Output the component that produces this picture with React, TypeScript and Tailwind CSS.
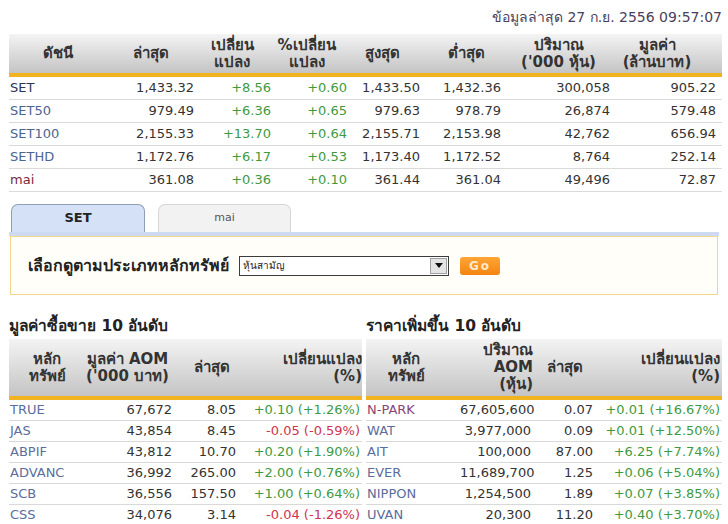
const font = "font-['DejaVu_Sans','Noto_Sans',sans-serif]";

type IndexRow = {
  name: string;
  color: string;
  last: string;
  chg: string;
  pct: string;
  high: string;
  low: string;
  vol: string;
  val: string;
};

const indexRows: IndexRow[] = [
  { name: "SET", color: "text-[#2b3553]", last: "1,433.32", chg: "+8.56", pct: "+0.60", high: "1,433.50", low: "1,432.36", vol: "300,058", val: "905.22" },
  { name: "SET50", color: "text-[#4b6591]", last: "979.49", chg: "+6.36", pct: "+0.65", high: "979.63", low: "978.79", vol: "26,874", val: "579.48" },
  { name: "SET100", color: "text-[#4b6591]", last: "2,155.33", chg: "+13.70", pct: "+0.64", high: "2,155.71", low: "2,153.98", vol: "42,762", val: "656.94" },
  { name: "SETHD", color: "text-[#4b6591]", last: "1,172.76", chg: "+6.17", pct: "+0.53", high: "1,173.40", low: "1,172.52", vol: "8,764", val: "252.14" },
  { name: "mai", color: "text-[#7b2740]", last: "361.08", chg: "+0.36", pct: "+0.10", high: "361.44", low: "361.04", vol: "49,496", val: "72.87" },
];

type TopRow = { sym: string; color?: string; a: string; last: string; chg: string; up: boolean };

const topValue: TopRow[] = [
  { sym: "TRUE", a: "67,672", last: "8.05", chg: "+0.10 (+1.26%)", up: true },
  { sym: "JAS", a: "43,854", last: "8.45", chg: "-0.05 (-0.59%)", up: false },
  { sym: "ABPIF", a: "43,812", last: "10.70", chg: "+0.20 (+1.90%)", up: true },
  { sym: "ADVANC", a: "36,992", last: "265.00", chg: "+2.00 (+0.76%)", up: true },
  { sym: "SCB", a: "36,556", last: "157.50", chg: "+1.00 (+0.64%)", up: true },
  { sym: "CSS", a: "34,076", last: "3.14", chg: "-0.04 (-1.26%)", up: false },
];

const topGain: TopRow[] = [
  { sym: "N-PARK", color: "text-[#8a4677]", a: "67,605,600", last: "0.07", chg: "+0.01 (+16.67%)", up: true },
  { sym: "WAT", a: "3,977,000", last: "0.09", chg: "+0.01 (+12.50%)", up: true },
  { sym: "AIT", a: "100,000", last: "87.00", chg: "+6.25 (+7.74%)", up: true },
  { sym: "EVER", a: "11,689,700", last: "1.25", chg: "+0.06 (+5.04%)", up: true },
  { sym: "NIPPON", a: "1,254,500", last: "1.89", chg: "+0.07 (+3.85%)", up: true },
  { sym: "UVAN", a: "20,300", last: "11.20", chg: "+0.40 (+3.70%)", up: true },
];

const green = "text-[#3f9a3f]";
const red = "text-[#d0344e]";

function HeaderBar({ cols, h, children }: { cols: string; h: string; children: React.ReactNode }) {
  return (
    <>
      <div className={`grid ${cols} ${h} items-center bg-linear-to-b from-[#f4f4f4] to-[#c4c4c4] text-[15px] font-bold leading-[17px] text-[#333]`}>
        {children}
      </div>
      <div className="h-[4px] bg-[#f2b320]" />
    </>
  );
}

function TopTable({ title, rows, headCols, rowCols, head }: { title: string; rows: TopRow[]; headCols: string; rowCols: string; head: React.ReactNode }) {
  return (
    <div>
      <div className="mt-[22px] h-[19px] text-[15.5px] font-bold leading-[19px] text-[#222]">{title}</div>
      <div className="mt-[3px]">
        <HeaderBar cols={headCols} h="h-[57px]">
          {head}
        </HeaderBar>
        {rows.map((r) => (
          <div key={r.sym} className={`grid ${rowCols} h-[21px] items-center border-b border-[#d9d9d9] text-[13px] leading-[20px]`}>
            <div className={`pl-[1px] ${r.color ?? "text-[#5b6d9c]"}`}>{r.sym}</div>
            <div className="pr-[6px] text-right text-[#333]">{r.a}</div>
            <div className="pr-[6px] text-right text-[#333]">{r.last}</div>
            <div className={`whitespace-nowrap pr-[2px] text-right ${r.up ? green : red}`}>{r.chg}</div>
          </div>
        ))}
      </div>
    </div>
  );
}

export default function App() {
  return (
    <div className={`${font} h-[524px] w-[728px] overflow-hidden bg-white`}>
      <div className="flex h-[34px] justify-end pr-[6px] pt-[9px] text-[14px] leading-[17px] text-[#4a3f5c]">
        ข้อมูลล่าสุด 27 ก.ย. 2556 09:57:07
      </div>

      <div className="ml-[9px] w-[713px]">
        <HeaderBar cols="grid-cols-[98px_87px_76px_73px_79px_89px_95px_116px]" h="h-[39px]">
          <div className="text-center">ดัชนี</div>
          <div className="text-center">ล่าสุด</div>
          <div className="text-center">เปลี่ยน<br />แปลง</div>
          <div className="text-center">%เปลี่ยน<br />แปลง</div>
          <div className="text-center">สูงสุด</div>
          <div className="text-center">ต่ำสุด</div>
          <div className="whitespace-nowrap text-center">ปริมาณ<br />('000 หุ้น)</div>
          <div className="whitespace-nowrap pr-[14px] text-center">มูลค่า<br />(ล้านบาท)</div>
        </HeaderBar>
        {indexRows.map((r) => (
          <div key={r.name} className="grid h-[23px] grid-cols-[115px_76px_77px_76px_73px_81px_109px_106px] items-center border-b border-[#dadada] text-[13px] leading-[20px] text-[#333]">
            <div className={`pl-[1px] ${r.color}`}>{r.name}</div>
            <div className="pr-[6px] text-right">{r.last}</div>
            <div className={`pr-[6px] text-right ${green}`}>{r.chg}</div>
            <div className={`pr-[6px] text-right ${green}`}>{r.pct}</div>
            <div className="pr-[6px] text-right">{r.high}</div>
            <div className="pr-[6px] text-right">{r.low}</div>
            <div className="pr-[6px] text-right">{r.vol}</div>
            <div className="pr-[6px] text-right">{r.val}</div>
          </div>
        ))}
      </div>

      {/* tabs */}
      <div className="ml-[11px] mt-[12px] flex h-[28px] items-end gap-[13px]">
        <div className="h-[28px] w-[134px] rounded-t-[7px] border border-b-0 border-[#8f9db5] bg-[#d4e1f6] text-center text-[13px] font-bold leading-[26px] text-[#222]">
          SET
        </div>
        <div className="h-[28px] w-[133px] rounded-t-[7px] border border-b-0 border-[#d6d6d6] bg-[#f2f2f2] text-center text-[11px] leading-[26px] text-[#555]">
          mai
        </div>
      </div>
      <div className="ml-[9px] h-[4px] w-[710px] bg-[#cddaf2]" />
      <div className="ml-[10px] flex h-[59px] w-[708px] items-center border border-[#f0d78a] bg-[#fffef8] pl-[17px]">
        <span className="w-[211px] whitespace-nowrap text-[16px] font-bold text-[#222]">เลือกดูตามประเภทหลักทรัพย์</span>
        <div className="flex h-[20px] w-[210px] items-center border border-[#3c3c3c] bg-white">
          <span className="flex-1 pl-[3px] text-[10px] text-[#222]">หุ้นสามัญ</span>
          <div className="mr-[1px] flex h-[16px] w-[17px] items-center justify-center border border-[#a0a0a0] bg-[#e4e4e4]">
            <svg width="8" height="5" viewBox="0 0 8 5">
              <path d="M0 0h8L4 5z" fill="#111" />
            </svg>
          </div>
        </div>
        <div className="ml-[11px] flex h-[18px] w-[40px] items-center justify-center rounded-[3px] bg-linear-to-b from-[#ffa534] to-[#f3840e] text-[12px] font-bold tracking-[2px] text-[#ffe9cc]">
          Go
        </div>
      </div>

      <div className="flex">
        <div className="ml-[9px] w-[353px]">
          <TopTable
            title="มูลค่าซื้อขาย 10 อันดับ"
            rows={topValue}
            headCols="grid-cols-[76px_85px_84px_108px]"
            rowCols="grid-cols-[91px_78px_64px_120px]"
            head={
              <>
                <div className="text-center">หลัก<br />ทรัพย์</div>
                <div className="whitespace-nowrap text-center">มูลค่า AOM<br />('000 บาท)</div>
                <div className="text-center">ล่าสุด</div>
                <div className="whitespace-nowrap text-right">เปลี่ยนแปลง<br />(%)</div>
              </>
            }
          />
        </div>
        <div className="ml-[4px] w-[356px]">
          <TopTable
            title="ราคาเพิ่มขึ้น 10 อันดับ"
            rows={topGain}
            headCols="grid-cols-[80px_91px_62px_123px]"
            rowCols="grid-cols-[94px_77px_62px_123px]"
            head={
              <>
                <div className="text-center">หลัก<br />ทรัพย์</div>
                <div className="pr-[4px] text-right">ปริมาณ<br />AOM<br />(หุ้น)</div>
                <div className="pr-[6px] text-center">ล่าสุด</div>
                <div className="whitespace-nowrap pr-[2px] text-right">เปลี่ยนแปลง<br />(%)</div>
              </>
            }
          />
        </div>
      </div>
    </div>
  );
}
